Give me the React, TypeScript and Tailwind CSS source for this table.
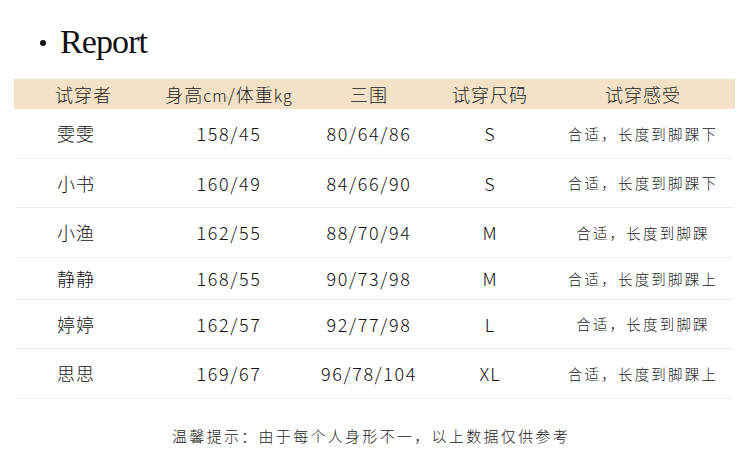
import React from 'react';

interface Row {
  name: string;
  hw: string;
  bwh: string;
  size: string;
  feel: string;
  h: string;
}

const rows: Row[] = [
  { name: '雯雯', hw: '158/45', bwh: '80/64/86', size: 'S', feel: '合适，长度到脚踝下', h: 'h-[50px]' },
  { name: '小书', hw: '160/49', bwh: '84/66/90', size: 'S', feel: '合适，长度到脚踝下', h: 'h-[49px]' },
  { name: '小渔', hw: '162/55', bwh: '88/70/94', size: 'M', feel: '合适，长度到脚踝', h: 'h-[50px]' },
  { name: '静静', hw: '168/55', bwh: '90/73/98', size: 'M', feel: '合适，长度到脚踝上', h: 'h-[42px]' },
  { name: '婷婷', hw: '162/57', bwh: '92/77/98', size: 'L', feel: '合适，长度到脚踝', h: 'h-[49px]' },
  { name: '思思', hw: '169/67', bwh: '96/78/104', size: 'XL', feel: '合适，长度到脚踝上', h: 'h-[50px]' },
];

const cjk = "font-['Noto_Sans_CJK_SC',sans-serif]";
const grid = 'grid grid-cols-[140px_146px_134px_108px_191px] items-center';

export default function App() {
  return (
    <div className={`w-[750px] h-[469px] bg-white overflow-hidden ${cjk}`}>
      <div className="h-[79px] pt-[21px] pl-[40px] flex items-start">
        <div className="flex items-center h-[42px] text-[#111] font-['Liberation_Serif',serif]">
          <span className="w-[6px] h-[6px] rounded-full bg-[#111] mr-[14px] mt-[2px]" />
          <span className="text-[34px] leading-none tracking-[-0.9px]">Report</span>
        </div>
      </div>

      <div className="ml-[14px] w-[721px]">
        <div className="h-[30px] bg-[#f3e2c7] text-[18px] tracking-[1px] text-[#222] font-light">
          <div className={`${grid} h-full ml-[2px]`}>
            <div className="pl-[39px]">试穿者</div>
            <div className="text-center">
              身高<span className="text-[16px]">cm</span>/体重<span className="text-[16px]">kg</span>
            </div>
            <div className="text-center">三围</div>
            <div className="text-center">试穿尺码</div>
            <div className="text-center pl-[7px]">试穿感受</div>
          </div>
        </div>

        {rows.map((r) => (
          <div key={r.name} className={`${grid} ${r.h} mx-[2px] border-b border-[#ececec] text-[#111] font-light`}>
            <div className="pl-[41px] text-[18px] tracking-[1px]">{r.name}</div>
            <div className="text-center text-[18px] tracking-[1.6px]">{r.hw}</div>
            <div className="text-center text-[18px] tracking-[1.6px]">{r.bwh}</div>
            <div className="text-center text-[18px] tracking-[1px]">{r.size}</div>
            <div className="text-center pl-[7px] text-[14.5px] tracking-[2.2px] text-[#222]">{r.feel}</div>
          </div>
        ))}
      </div>

      <div className="h-[71px] flex items-center justify-center pt-[3px] pr-[8px]">
        <span className="text-[15px] tracking-[2.3px] text-[#222] font-light">温馨提示：由于每个人身形不一，以上数据仅供参考</span>
      </div>
    </div>
  );
}
